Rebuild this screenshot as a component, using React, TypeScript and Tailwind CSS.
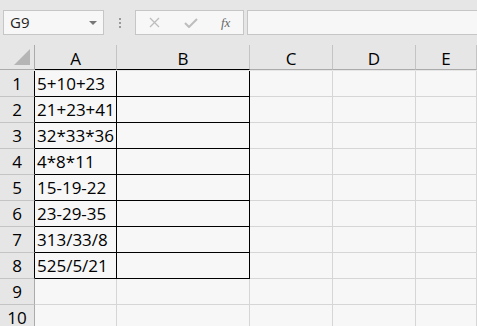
import React from 'react';

const rows = ['5+10+23', '21+23+41', '32*33*36', '4*8*11', '15-19-22', '23-29-35', '313/33/8', '525/5/21', '', ''];
const cols = ['A', 'B', 'C', 'D', 'E'];

export default function App() {
    return (
        <div
            className="w-[477px] h-[326px] overflow-hidden bg-[#e6e6e6] text-black"
            style={{ fontFamily: '"Open Sans", "Liberation Sans", sans-serif' }}
        >
            {/* formula bar */}
            <div className="flex items-center h-[45px] pl-[3px] pb-[10px] pt-[10px]">
                <div className="flex items-center justify-between w-[101px] h-[25px] bg-[#f7f7f7] border border-[#c6c6c6] pl-[6px] pr-[5px]">
                    <span className="text-[15px] text-[#222]">G9</span>
                    <svg width="10" height="6" viewBox="0 0 10 6">
                        <polygon points="1,1 9,1 5,5" fill="#777" />
                    </svg>
                </div>
                <div className="flex flex-col gap-[2px] items-center w-[31px]">
                    <span className="w-[2px] h-[2px] bg-[#9a9a9a]" />
                    <span className="w-[2px] h-[2px] bg-[#9a9a9a]" />
                    <span className="w-[2px] h-[2px] bg-[#9a9a9a]" />
                </div>
                <div className="flex items-center w-[109px] h-[25px] bg-[#f7f7f7] border border-[#c6c6c6]">
                    <svg className="ml-[13px]" width="11" height="11" viewBox="0 0 11 11">
                        <path d="M1 1 L10 10 M10 1 L1 10" stroke="#bdbdbd" strokeWidth="1.3" />
                    </svg>
                    <svg className="ml-[24px]" width="14" height="11" viewBox="0 0 14 11">
                        <path d="M1 6 L5 10 L13 2" stroke="#bdbdbd" strokeWidth="2" fill="none" />
                    </svg>
                    <span
                        className="ml-[23px] text-[13px] italic text-[#666]"
                        style={{ fontFamily: '"Liberation Serif", serif' }}
                    >
                        fx
                    </span>
                </div>
                <div className="ml-[3px] flex-1 h-[25px] bg-[#f7f7f7] border border-[#c6c6c6] border-r-0" />
            </div>

            {/* sheet */}
            <div className="grid grid-cols-[35px_82px_133px_83px_83px_1fr] auto-rows-[26px] text-[17px]">
                <div className="h-[25px] border-r border-b border-[#ababab] flex items-end justify-end pr-[4px] pb-[4px]">
                    <svg width="16" height="16" viewBox="0 0 16 16">
                        <polygon points="16,0 16,16 0,16" fill="#b5b5b5" />
                    </svg>
                </div>
                {cols.map((c, i) => (
                    <div
                        key={c}
                        className={`h-[25px] flex items-center justify-center pt-[3px] border-r border-[#c4c4c4] border-b ${
                            i < 2 ? 'border-b-black' : 'border-b-[#ababab]'
                        }`}
                    >
                        {c}
                    </div>
                ))}
                {rows.map((v, r) => (
                    <React.Fragment key={r}>
                        <div
                            className={`flex items-center justify-center border-b border-b-[#c4c4c4] border-r ${
                                r < 8 ? 'border-r-black' : 'border-r-[#ababab]'
                            }`}
                        >
                            {r + 1}
                        </div>
                        {cols.map((c, i) =>
                            r < 8 && i < 2 ? (
                                <div
                                    key={c}
                                    className="bg-[#f7f7f7] border-r border-b border-black pl-[2px] flex items-center leading-none whitespace-nowrap"
                                >
                                    {i === 0 ? v : ''}
                                </div>
                            ) : (
                                <div
                                    key={c}
                                    className="bg-[#f7f7f7] border-r border-b border-[#d6d6d6]"
                                />
                            )
                        )}
                    </React.Fragment>
                ))}
            </div>
        </div>
    );
}
